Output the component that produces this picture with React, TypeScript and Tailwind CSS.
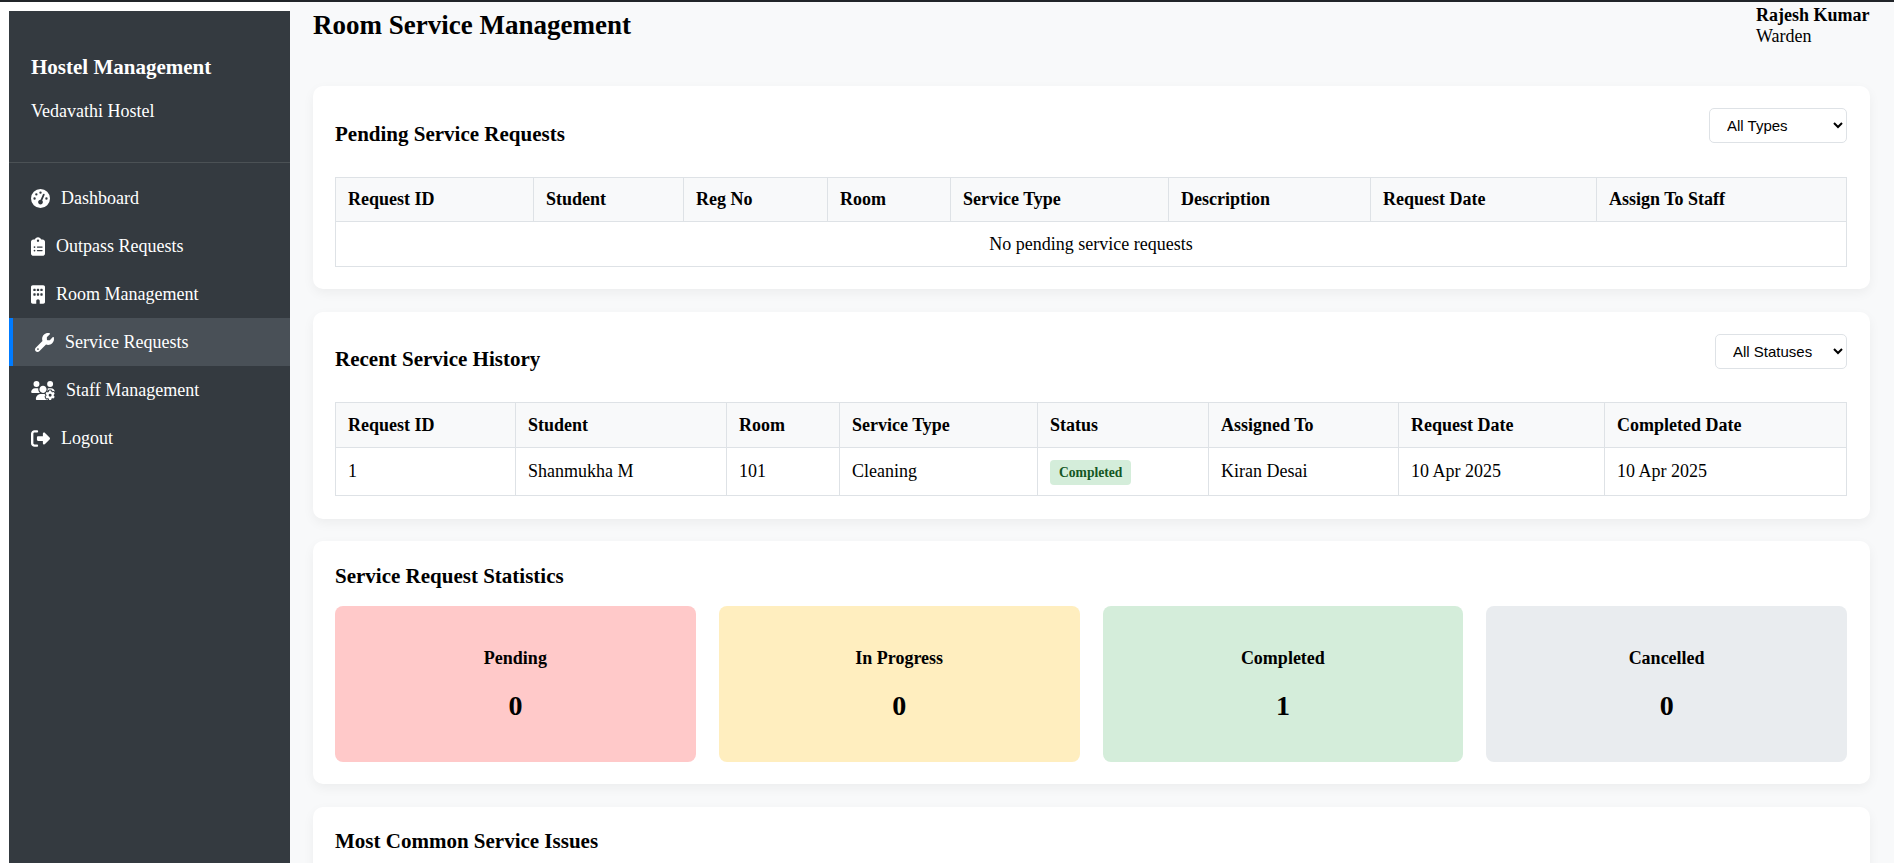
import { FaGaugeHigh, FaClipboardList, FaBuilding, FaWrench, FaUsersGear, FaRightFromBracket } from "react-icons/fa6"

const navItems = [
  { label: "Dashboard", icon: FaGaugeHigh, iconWidth: "w-[19px]" },
  { label: "Outpass Requests", icon: FaClipboardList, iconWidth: "w-[14px]" },
  { label: "Room Management", icon: FaBuilding, iconWidth: "w-[14px]" },
  { label: "Service Requests", icon: FaWrench, iconWidth: "w-[19px]", active: true },
  { label: "Staff Management", icon: FaUsersGear, iconWidth: "w-[24px]" },
  { label: "Logout", icon: FaRightFromBracket, iconWidth: "w-[19px]" },
]

const pendingCols = [
  ["Request ID", "w-[198px]"],
  ["Student", "w-[150px]"],
  ["Reg No", "w-[144px]"],
  ["Room", "w-[123px]"],
  ["Service Type", "w-[218px]"],
  ["Description", "w-[202px]"],
  ["Request Date", "w-[226px]"],
  ["Assign To Staff", ""],
]

const historyCols = [
  ["Request ID", "w-[180px]"],
  ["Student", "w-[211px]"],
  ["Room", "w-[113px]"],
  ["Service Type", "w-[198px]"],
  ["Status", "w-[171px]"],
  ["Assigned To", "w-[190px]"],
  ["Request Date", "w-[206px]"],
  ["Completed Date", ""],
]

const stats = [
  { label: "Pending", value: 0, bg: "bg-[#ffc9c9]" },
  { label: "In Progress", value: 0, bg: "bg-[#ffeebf]" },
  { label: "Completed", value: 1, bg: "bg-[#d4edda]" },
  { label: "Cancelled", value: 0, bg: "bg-[#e9ecef]" },
]

const cardClass = "rounded-[10px] bg-white pr-[23px] pl-[22px] shadow-[0_4px_12px_rgba(0,0,0,0.05)]"
const thClass = "border border-[#dee2e6] bg-[#f8f9fa] px-3 text-left font-bold"
const tdClass = "border border-[#dee2e6] px-3 text-left font-normal"

function Filter({ label, width }: { label: string; width: string }) {
  return (
    <select className={`h-[35px] rounded-[5px] border border-[#dee2e6] bg-white pl-[13px] font-['Liberation_Sans',sans-serif] text-[15px] text-black ${width}`}>
      <option>{label}</option>
    </select>
  )
}

export default function App() {
  return (
    <div className="h-[863px] overflow-hidden bg-white font-['Liberation_Serif',serif] text-[18px] text-black">
      <div className="h-[2px] bg-[#212529]" />
      <div className="flex h-[861px]">
        <div className="w-[9px] shrink-0 bg-white" />
        <aside className="mt-[9px] w-[281px] shrink-0 bg-[#343a40] text-white">
          <div className="h-[152px] border-b border-[#4b5155] px-[22px] pt-[44px]">
            <h1 className="text-[21px] leading-[24px] font-bold">Hostel Management</h1>
            <p className="mt-[22px] text-[18px] leading-[20px]">Vedavathi Hostel</p>
          </div>
          <nav className="mt-[11px]">
            {navItems.map((item) => {
              const Icon = item.icon
              return (
                <div
                  key={item.label}
                  className={
                    item.active
                      ? "flex h-12 items-center gap-[11px] border-l-4 border-[#007bff] bg-[#495057] pl-[22px]"
                      : "flex h-12 items-center gap-[11px] pl-[22px]"
                  }
                >
                  <Icon className={`h-[19px] shrink-0 ${item.iconWidth}`} />
                  <span>{item.label}</span>
                </div>
              )
            })}
          </nav>
        </aside>

        <main className="min-w-0 flex-1 bg-[#f8f9fa] pr-6 pl-[23px]">
          <header className="flex h-[84px] items-start justify-between">
            <h2 className="mt-[8px] text-[27px] leading-[31px] font-bold">Room Service Management</h2>
            <div className="mt-[3px] mr-[-3px] w-[117px] leading-[21px]">
              <div className="font-bold">Rajesh Kumar</div>
              <div>Warden</div>
            </div>
          </header>

          <section className={`${cardClass} h-[203px] pt-[22px]`}>
            <div className="flex h-[69px] items-start justify-between">
              <h3 className="mt-[14px] text-[21px] leading-[24px] font-bold">Pending Service Requests</h3>
              <Filter label="All Types" width="w-[138px]" />
            </div>
            <table className="w-full table-fixed border-collapse">
              <thead>
                <tr className="h-[44px]">
                  {pendingCols.map(([name, width]) => (
                    <th key={name} className={`${thClass} ${width}`}>{name}</th>
                  ))}
                </tr>
              </thead>
              <tbody>
                <tr className="h-[45px]">
                  <td colSpan={8} className="border border-[#dee2e6] text-center">No pending service requests</td>
                </tr>
              </tbody>
            </table>
          </section>

          <section className={`${cardClass} mt-[23px] h-[207px] pt-[22px]`}>
            <div className="flex h-[68px] items-start justify-between">
              <h3 className="mt-[13px] text-[21px] leading-[24px] font-bold">Recent Service History</h3>
              <Filter label="All Statuses" width="w-[132px]" />
            </div>
            <table className="w-full table-fixed border-collapse">
              <thead>
                <tr className="h-[45px]">
                  {historyCols.map(([name, width]) => (
                    <th key={name} className={`${thClass} ${width}`}>{name}</th>
                  ))}
                </tr>
              </thead>
              <tbody>
                <tr className="h-[48px]">
                  <td className={tdClass}>1</td>
                  <td className={tdClass}>Shanmukha M</td>
                  <td className={tdClass}>101</td>
                  <td className={tdClass}>Cleaning</td>
                  <td className={tdClass}>
                    <span className="inline-block rounded-[4px] bg-[#d4edda] px-[9px] py-[5px] align-middle text-[13.6px] leading-[15px] font-bold text-[#155724]">Completed</span>
                  </td>
                  <td className={tdClass}>Kiran Desai</td>
                  <td className={tdClass}>10 Apr 2025</td>
                  <td className={tdClass}>10 Apr 2025</td>
                </tr>
              </tbody>
            </table>
          </section>

          <section className={`${cardClass} mt-[22px] h-[243px] pt-[23px]`}>
            <h3 className="text-[21px] leading-[24px] font-bold">Service Request Statistics</h3>
            <div className="mt-[18px] grid grid-cols-4 gap-[23px]">
              {stats.map((stat) => (
                <div key={stat.label} className={`flex h-[156px] flex-col items-center rounded-[8px] pt-[42px] ${stat.bg}`}>
                  <div className="text-[18px] leading-[21px] font-bold">{stat.label}</div>
                  <div className="mt-[21px] text-[28px] leading-[32px] font-bold">{stat.value}</div>
                </div>
              ))}
            </div>
          </section>

          <section className={`${cardClass} mt-[23px] h-[100px] pt-[22px]`}>
            <h3 className="text-[21px] leading-[24px] font-bold">Most Common Service Issues</h3>
          </section>
        </main>
      </div>
    </div>
  )
}
